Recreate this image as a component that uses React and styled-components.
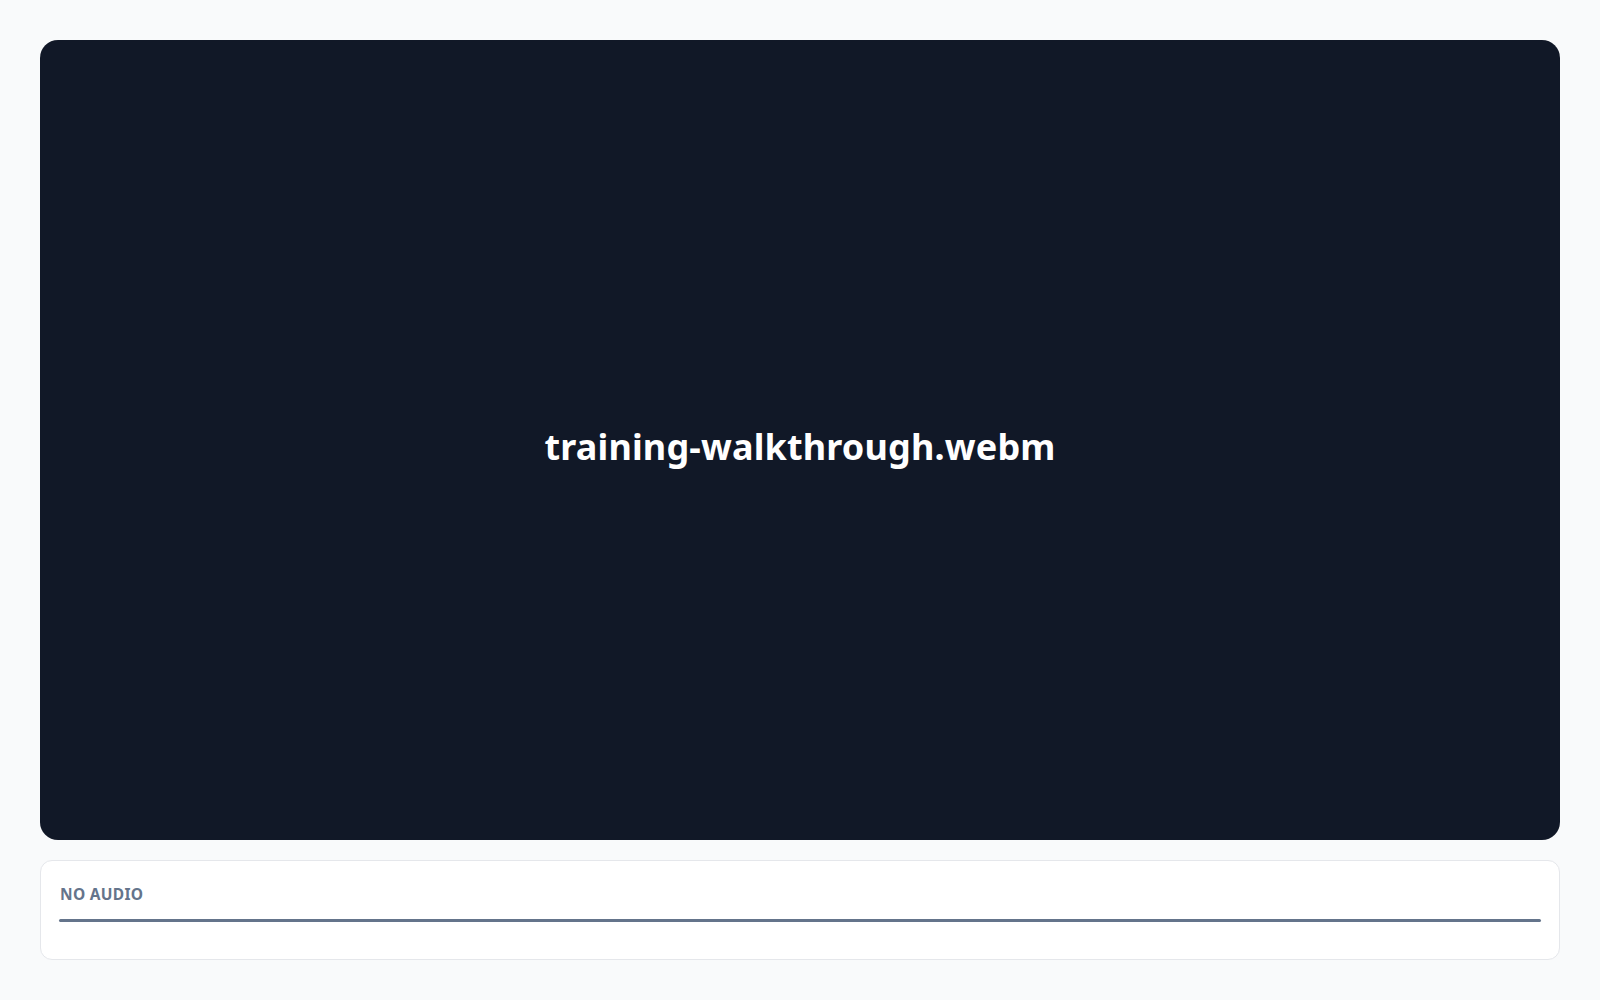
import React from "react";
import styled, { createGlobalStyle } from "styled-components";

const Global = createGlobalStyle`
  html, body { margin: 0; padding: 0; background: #f9fafb; }
  body { font-family: "Noto Sans", "Open Sans", sans-serif; }
  * { box-sizing: border-box; }
`;

const Page = styled.div`
  padding: 40px;
  display: flex;
  flex-direction: column;
  gap: 20px;
  min-height: 1000px;
`;

const Stage = styled.div`
  height: 800px;
  background: #111827;
  border-radius: 18px;
  display: flex;
  align-items: center;
  justify-content: center;
`;

const Title = styled.div`
  color: #ffffff;
  font-family: "Noto Sans", "Open Sans", sans-serif;
  font-weight: 700;
  font-size: 36px;
  letter-spacing: 0.15px;
  line-height: 1.2;
  padding-top: 14px;
`;

const AudioCard = styled.div`
  height: 100px;
  background: #ffffff;
  border: 1px solid #e5e7eb;
  border-radius: 12px;
  padding: 23px 18px 0 18px;
  display: flex;
  flex-direction: column;
  gap: 15px;
`;

const Label = styled.div`
  color: #64748b;
  font-family: "Noto Sans", "Open Sans", sans-serif;
  font-weight: 700;
  font-size: 15.5px;
  letter-spacing: 0.3px;
  line-height: 20px;
  padding-left: 1px;
`;

const Track = styled.div`
  height: 3px;
  background: #64748b;
  border-radius: 2px;
`;

export default function App() {
  return (
    <>
      <Global />
      <Page>
        <Stage>
          <Title>training-walkthrough.webm</Title>
        </Stage>
        <AudioCard>
          <Label>NO AUDIO</Label>
          <Track />
        </AudioCard>
      </Page>
    </>
  );
}
